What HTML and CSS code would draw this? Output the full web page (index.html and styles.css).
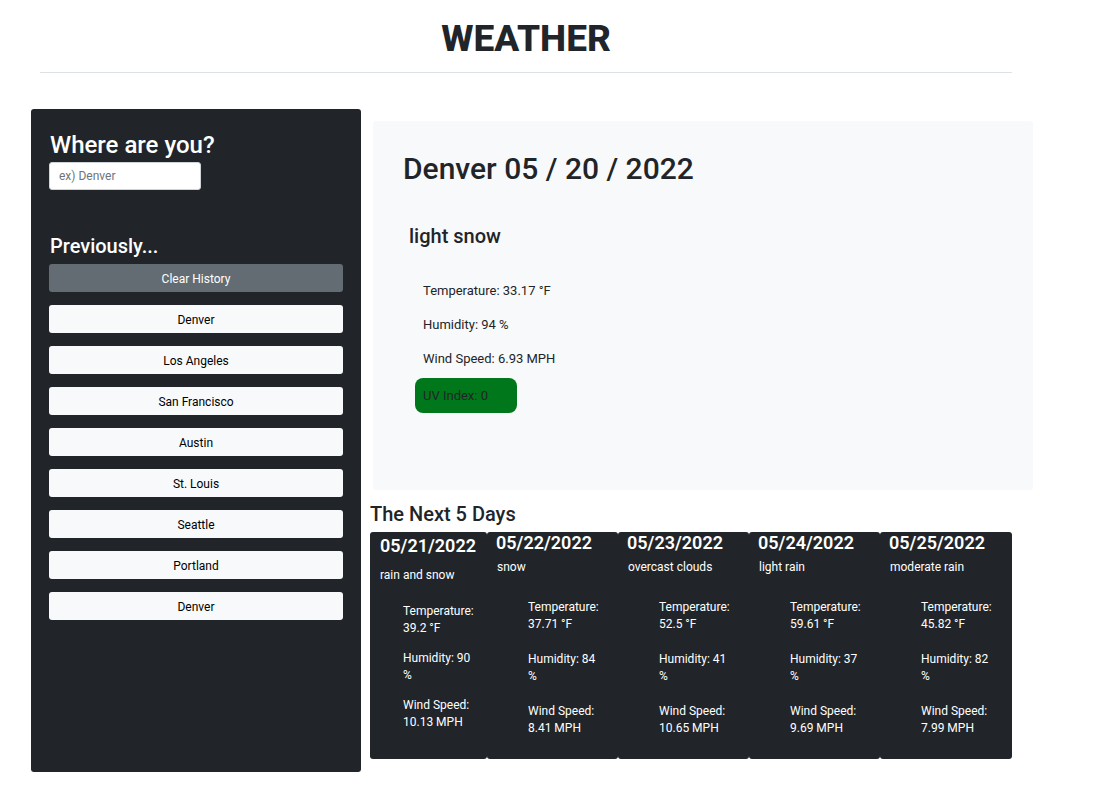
FILE: index.html
```html
<!DOCTYPE html>
<html lang="en">
<head>
<meta charset="utf-8">
<title>Weather</title>
<link rel="stylesheet" href="styles.css">
</head>
<body>
<header class="page-header">
  <h1 class="title">WEATHER</h1>
  <hr class="rule">
</header>
<div class="layout">
  <aside class="sidebar">
    <h2 class="side-heading">Where are you?</h2>
    <input class="search" type="text" placeholder="ex) Denver">
    <h3 class="prev-heading">Previously...</h3>
    <button class="btn btn-clear">Clear History</button>
    <button class="btn btn-city">Denver</button>
    <button class="btn btn-city">Los Angeles</button>
    <button class="btn btn-city">San Francisco</button>
    <button class="btn btn-city">Austin</button>
    <button class="btn btn-city">St. Louis</button>
    <button class="btn btn-city">Seattle</button>
    <button class="btn btn-city">Portland</button>
    <button class="btn btn-city">Denver</button>
  </aside>
  <main class="content">
    <section class="today">
      <h2 class="today-title">Denver 05 / 20 / 2022</h2>
      <h3 class="today-desc">light snow</h3>
      <p class="stat">Temperature: 33.17 °F</p>
      <p class="stat">Humidity: 94 %</p>
      <p class="stat">Wind Speed: 6.93 MPH</p>
      <p class="uv">UV Index: 0</p>
    </section>
    <h3 class="next-heading">The Next 5 Days</h3>
    <div class="forecast">
      <div class="day day-first">
        <h4 class="day-date">05/21/2022</h4>
        <p class="day-desc">rain and snow</p>
        <div class="day-stats">
          <p>Temperature: 39.2 °F</p>
          <p>Humidity: 90 %</p>
          <p>Wind Speed: 10.13 MPH</p>
        </div>
      </div>
      <div class="day">
        <h4 class="day-date">05/22/2022</h4>
        <p class="day-desc">snow</p>
        <div class="day-stats">
          <p>Temperature: 37.71 °F</p>
          <p>Humidity: 84 %</p>
          <p>Wind Speed: 8.41 MPH</p>
        </div>
      </div>
      <div class="day">
        <h4 class="day-date">05/23/2022</h4>
        <p class="day-desc">overcast clouds</p>
        <div class="day-stats">
          <p>Temperature: 52.5 °F</p>
          <p>Humidity: 41 %</p>
          <p>Wind Speed: 10.65 MPH</p>
        </div>
      </div>
      <div class="day">
        <h4 class="day-date">05/24/2022</h4>
        <p class="day-desc">light rain</p>
        <div class="day-stats">
          <p>Temperature: 59.61 °F</p>
          <p>Humidity: 37 %</p>
          <p>Wind Speed: 9.69 MPH</p>
        </div>
      </div>
      <div class="day day-last">
        <h4 class="day-date">05/25/2022</h4>
        <p class="day-desc">moderate rain</p>
        <div class="day-stats">
          <p>Temperature: 45.82 °F</p>
          <p>Humidity: 82 %</p>
          <p>Wind Speed: 7.99 MPH</p>
        </div>
      </div>
    </div>
  </main>
</div>
</body>
</html>
```

FILE: styles.css
```css
* { box-sizing: border-box; }

body {
  margin: 0;
  font-family: Roboto, "Noto Sans", "Liberation Sans", sans-serif;
  color: #212529;
  background: #fff;
}

.page-header {
  margin-left: 40px;
  width: 972px;
}

.title {
  margin: 15px 0 0;
  font-size: 37px;
  line-height: 48px;
  font-weight: 800;
  text-align: center;
  color: #212529;
}

.rule {
  margin: 9px 0 0;
  border: 0;
  border-top: 1px solid #dee2e6;
}

.layout {
  display: flex;
  align-items: flex-start;
  margin-top: 36px;
  margin-left: 31px;
}

.sidebar {
  width: 330px;
  height: 663px;
  background: #212529;
  border-radius: 3px;
  padding: 22px 18px 0;
  display: flex;
  flex-direction: column;
  align-items: flex-start;
}

.side-heading {
  margin: 0;
  font-size: 24px;
  line-height: 29px;
  font-weight: 500;
  color: #fff;
  padding-left: 1px;
}

.search {
  margin-top: 2px;
  width: 152px;
  height: 28px;
  border: 1px solid #ced4da;
  border-radius: 3px;
  padding: 0 9px;
  font-family: inherit;
  font-size: 12px;
  color: #212529;
  background: #fff;
}

.search::placeholder { color: #6c757d; }

.prev-heading {
  margin: 44px 0 0;
  font-size: 20px;
  line-height: 24px;
  font-weight: 500;
  color: #fff;
  padding-left: 1px;
}

.btn {
  width: 294px;
  height: 28px;
  border: 0;
  border-radius: 3px;
  font-family: inherit;
  font-size: 12px;
  padding: 1px 0 0;
  margin-bottom: 13px;
  text-align: center;
}

.btn-clear {
  margin-top: 6px;
  background: #636c72;
  color: #fff;
}

.btn-city {
  background: #f8f9fa;
  color: #000;
}

.content {
  margin-left: 9px;
  width: 663px;
  padding-top: 12px;
}

.today {
  margin-left: 3px;
  width: 660px;
  height: 369px;
  background: #f8f9fa;
  border-radius: 3px;
  padding: 30px 30px 0;
}

.today-title {
  margin: 0;
  font-size: 30px;
  line-height: 36px;
  font-weight: 500;
  color: #212529;
}

.today-desc {
  margin: 37px 0 0 6px;
  font-size: 20px;
  line-height: 24px;
  font-weight: 500;
}

.stat {
  margin: 0 0 14px 20px;
  font-size: 13px;
  line-height: 20px;
}

.stat:first-of-type { margin-top: 33px; }

.stat:nth-of-type(3) { margin-bottom: 9px; }

.uv {
  margin: 0 0 0 12px;
  width: 102px;
  height: 35px;
  padding: 7px 8px;
  background: #00771b;
  border-radius: 8px;
  font-size: 13px;
  line-height: 21px;
  color: #212529;
}

.next-heading {
  margin: 12px 0 0;
  font-size: 20px;
  line-height: 24px;
  font-weight: 500;
}

.forecast {
  display: flex;
  margin-top: 6px;
  height: 227px;
}

.day {
  width: 131px;
  height: 227px;
  background: #212529;
  border-radius: 3px;
  padding: 0 12px 0 9px;
  color: #fff;
}

.day-first {
  width: 117px;
  padding: 3px 4px 0 10px;
}

.day-last { width: 132px; }

.day-date {
  margin: 0;
  font-size: 18px;
  line-height: 22px;
  font-weight: 600;
  white-space: nowrap;
}

.day-desc {
  margin: 4px 0 0 1px;
  font-size: 12px;
  line-height: 18px;
}

.day-first .day-desc { margin-top: 9px; margin-left: 0; }

.day-stats {
  width: 74px;
  margin: 23px 0 0 32px;
  font-size: 12px;
  line-height: 17px;
}

.day-stats p { margin: 0 0 18px; }

.day-first .day-stats { margin: 19px 0 0 23px; }

.day-first .day-stats p { margin-bottom: 13px; }
```
